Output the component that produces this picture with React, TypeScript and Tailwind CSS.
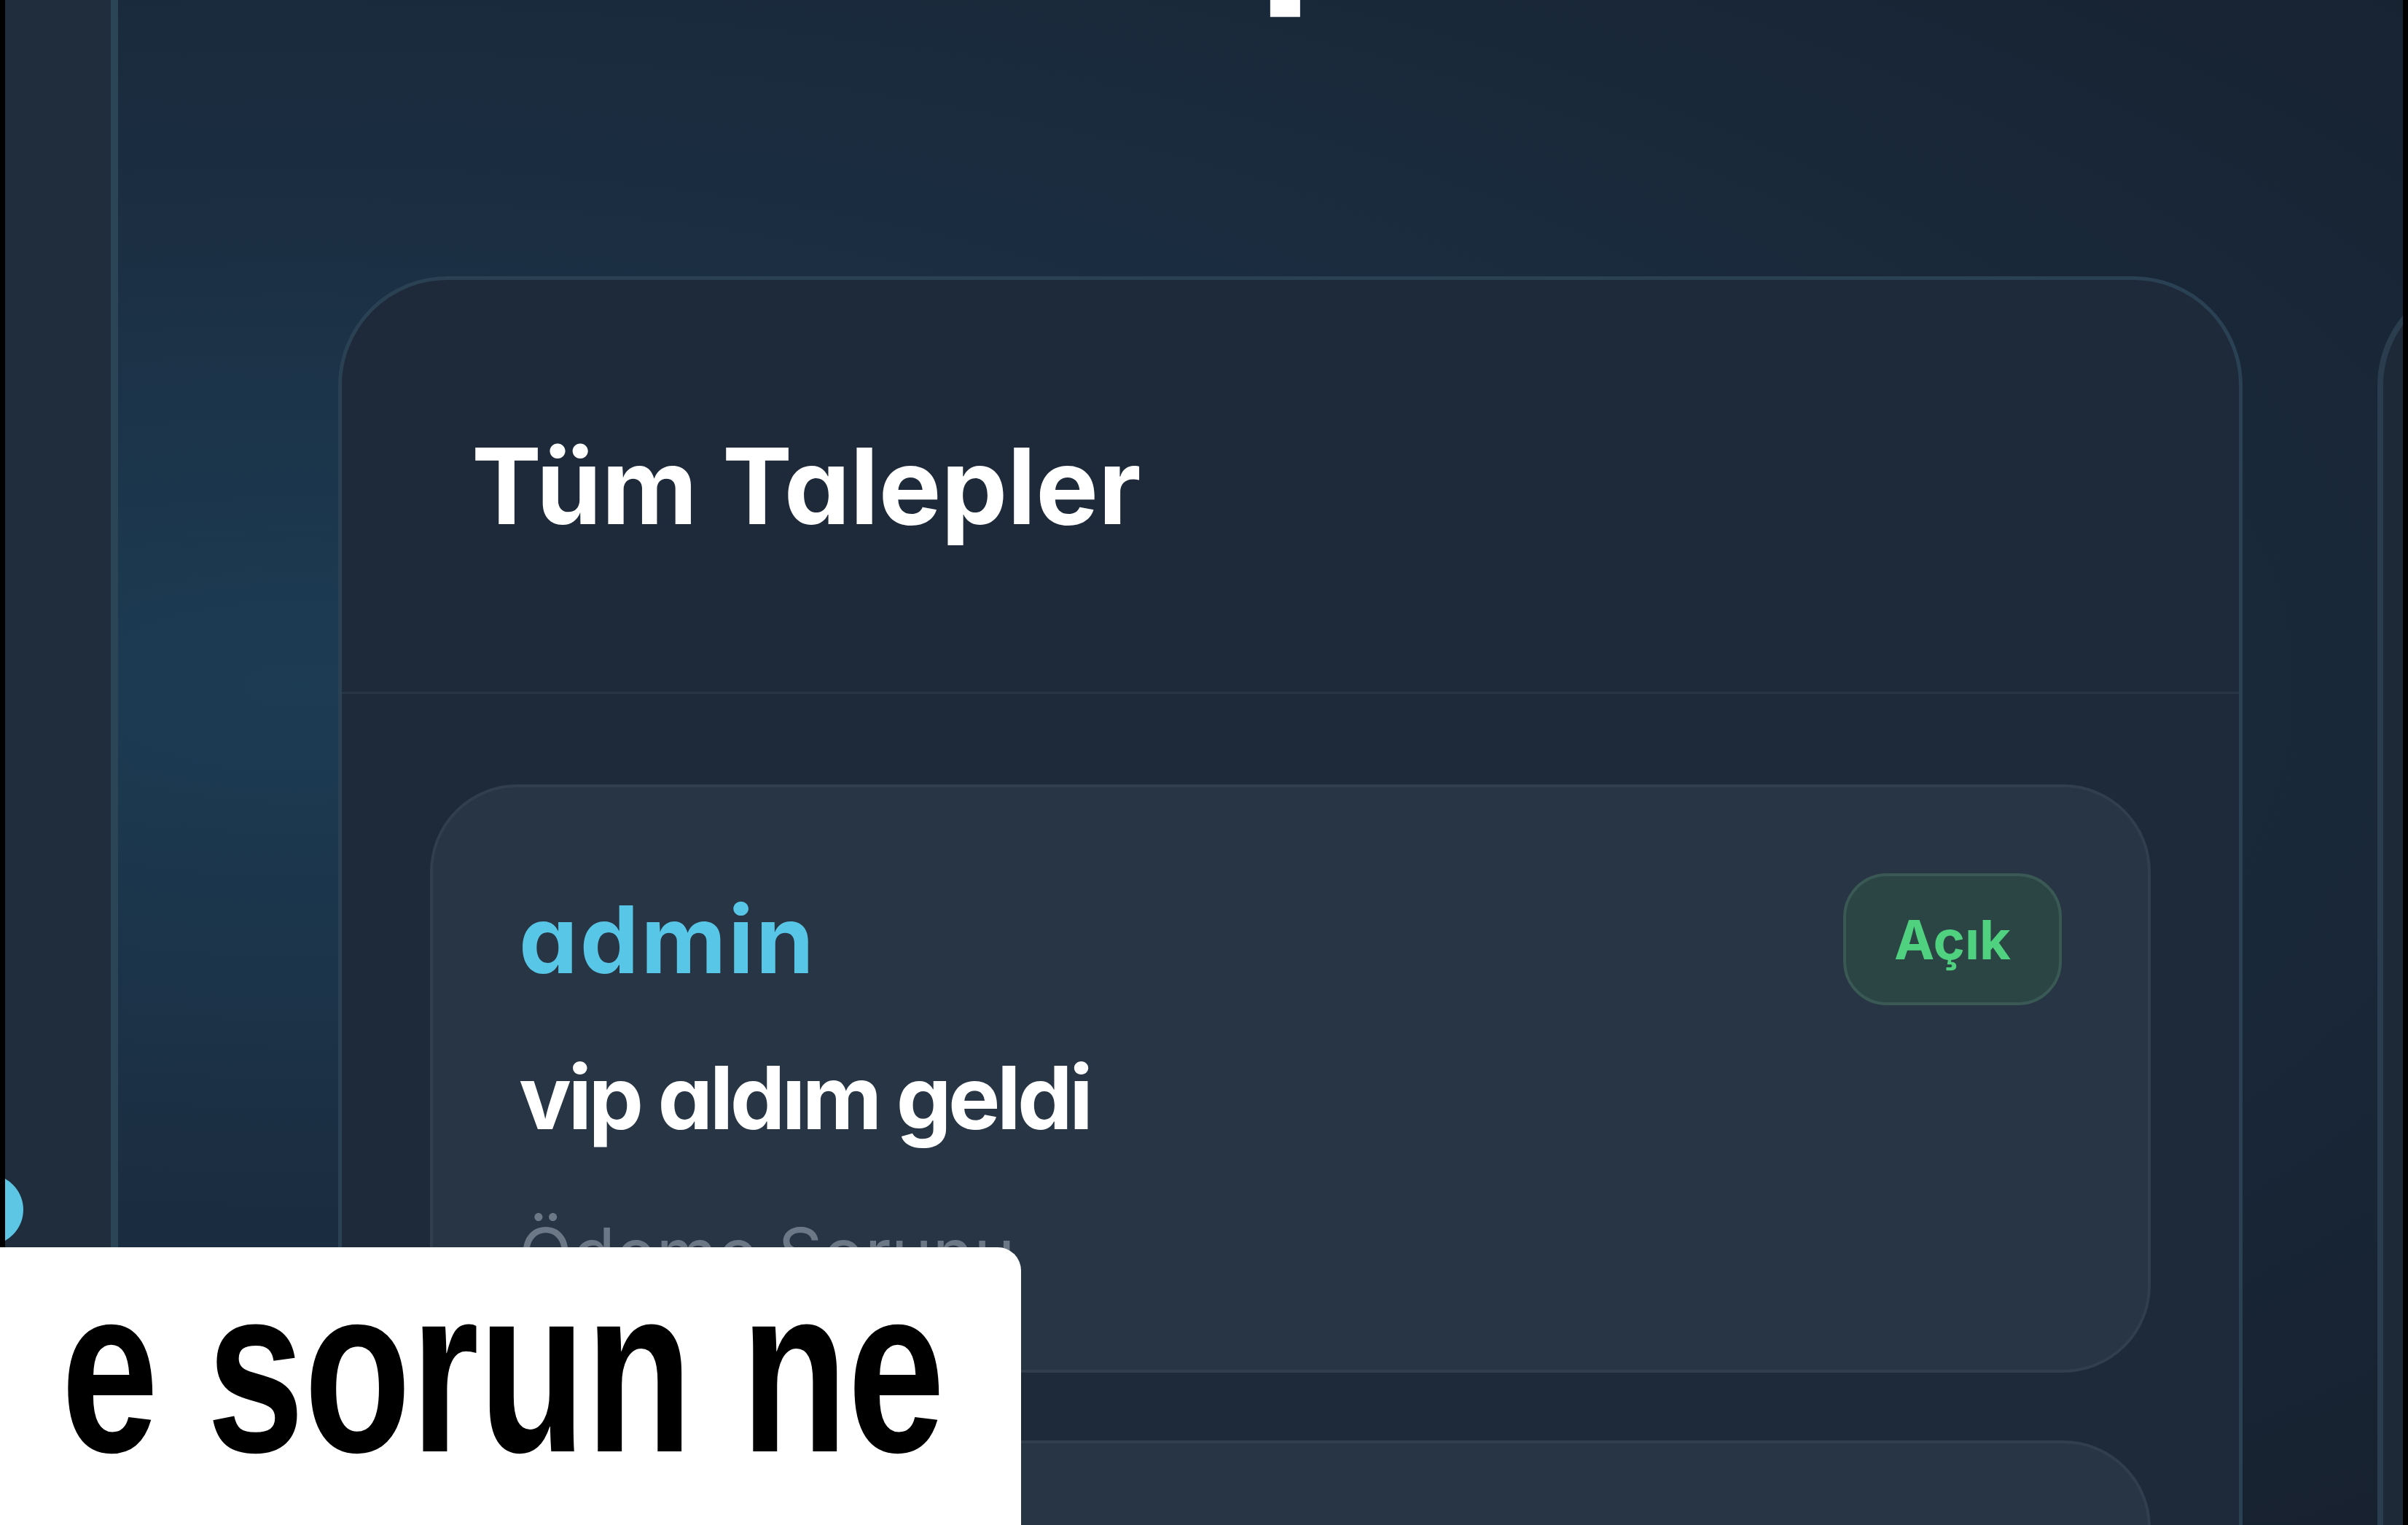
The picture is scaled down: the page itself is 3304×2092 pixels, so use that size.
import React from 'react';

type Ticket = {
  user: string;
  title: string;
  category: string;
  status: string;
};

const tickets: Ticket[] = [
  { user: 'admin', title: 'vip aldım geldi', category: 'Ödeme Sorunu', status: 'Açık' },
  { user: 'admin', title: 'sunucuya giremiyorum', category: 'Teknik Destek', status: 'Açık' },
];

const TicketCard: React.FC<{ ticket: Ticket }> = ({ ticket }) => (
  <div className="rounded-[120px] border-[4px] border-[#313e4e] bg-[#283544] px-[118px] pt-[118px] pb-[112px]">
    <div className="flex items-center justify-between h-[181px]">
      <span className="text-[128px] leading-none font-bold tracking-[3px] text-[#58c6e6]">{ticket.user}</span>
      <span className="flex items-center justify-center w-[300px] h-[181px] rounded-[60px] border-[4px] border-[#3a5955] bg-[#2b4545] text-[74px] leading-none font-bold text-[#4fd180]">
        {ticket.status}
      </span>
    </div>
    <p className="mt-[67px] text-[120px] leading-none font-bold tracking-[-4.5px] text-white">{ticket.title}</p>
    <p className="mt-[105px] text-[96px] leading-none font-normal text-[#6c7886]">{ticket.category}</p>
  </div>
);

const App: React.FC = () => {
  return (
    <div className="relative w-[3304px] h-[2092px] overflow-hidden bg-black flex font-['Inter',sans-serif] [font-feature-settings:'cv11']">
      <div className="w-[7px] shrink-0 bg-black" />

      {/* sol kenar çubuğu */}
      <aside className="relative w-[145px] shrink-0 overflow-hidden bg-[#1f2d3d]">
        <div className="absolute left-[-72px] top-[1611px] w-[97px] h-[97px] rounded-full bg-[#5cc6e4]" />
      </aside>
      <div className="w-[10px] shrink-0 bg-[#2b4556]" />

      <main className="relative flex-1 overflow-hidden bg-[radial-gradient(ellipse_at_8%_45%,#1c3c54_0%,#1b2e42_40%,#17212f_100%)]">
        <h1 className="-mt-[275px] -ml-[42px] h-[280px] text-left whitespace-nowrap text-[280px] leading-none font-bold text-white">
          Destek Talepleri
        </h1>

        <div className="mt-[374px] flex gap-[185px] pl-[302px]">
          <section className="w-[2613px] shrink-0 rounded-[150px] border-[5px] border-[#2a4153] bg-[#1e2a3a]">
            <div className="h-[568px] flex items-center px-[178px] border-b-[3px] border-[#273545]">
              <h2 className="text-[144px] leading-none font-bold text-white">Tüm Talepler</h2>
            </div>
            <div className="px-[121px] pt-[124px] flex flex-col gap-[93px]">
              {tickets.map((t, i) => (
                <TicketCard key={i} ticket={t} />
              ))}
            </div>
          </section>

          <section className="w-[900px] h-[2400px] shrink-0 rounded-[150px] border-[8px] border-[#2a3d4e] bg-[#1d2937]" />
        </div>
      </main>

      <div className="w-[7px] shrink-0 bg-black" />

      {/* altyazı */}
      <div className="absolute left-0 top-[1711px] w-[1401px] h-[400px] rounded-tr-[32px] bg-white pl-[84px] pt-[6px]">
        <span className="inline-block origin-left scale-x-[0.74] whitespace-nowrap text-[324px] leading-none font-bold text-black font-['Liberation_Sans',sans-serif] [font-feature-settings:normal]">
          e sorun ne
        </span>
      </div>
    </div>
  );
};

export default App;
